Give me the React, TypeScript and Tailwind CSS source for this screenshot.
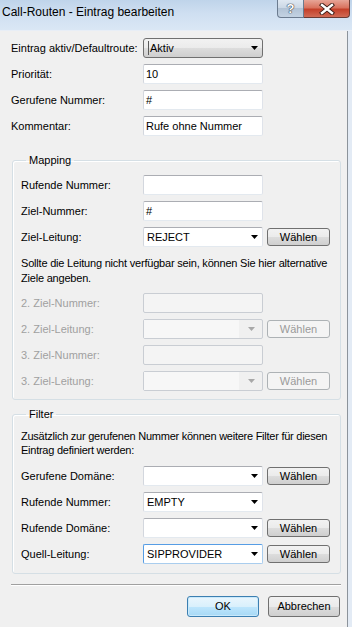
import React from "react";

const FONT = { fontFamily: '"Liberation Sans", Arial, sans-serif' };

function Arrow({ disabled }: { disabled?: boolean }) {
  return (
    <svg width="7" height="4" viewBox="0 0 7 4" className="shrink-0">
      <path d="M0 0H7L3.5 4Z" fill={disabled ? "#a8a8a8" : "#000"} />
    </svg>
  );
}

function TextBox({ value, disabled }: { value?: string; disabled?: boolean }) {
  return (
    <div
      className={
        disabled
          ? "w-[120px] h-[20px] rounded-[2px] border border-[#c9cdd3] bg-[#f4f4f4]"
          : "w-[120px] h-[20px] rounded-[2px] border border-[#abadb3] border-l-[#d3d7de] border-r-[#dfe3ea] border-b-[#e3e9ef] bg-white flex items-center pl-[2px] text-black"
      }
    >
      {value}
    </div>
  );
}

function Combo({ value, disabled, focused }: { value?: string; disabled?: boolean; focused?: boolean }) {
  if (disabled) {
    return (
      <div className="w-[120px] h-[20px] rounded-[2px] border border-[#c9cdd3] bg-[#f0f0f0] flex items-center">
        <div className="w-[95px] h-full bg-[#f7f7f7]" />
        <div className="flex-1 flex items-center justify-center pl-[2px]">
          <Arrow disabled />
        </div>
      </div>
    );
  }
  return (
    <div
      className={
        focused
          ? "w-[120px] h-[20px] rounded-[2px] border border-[#569de5] border-b-[#a9cdee] border-r-[#a9cdee] bg-white flex items-center pl-[3px] pr-[4px]"
          : "w-[120px] h-[20px] rounded-[2px] border border-[#abadb3] border-l-[#d3d7de] border-r-[#dfe3ea] border-b-[#e3e9ef] bg-white flex items-center pl-[3px] pr-[4px]"
      }
    >
      <span className="flex-1 text-black">{value}</span>
      <Arrow />
    </div>
  );
}

function BtnCombo({ value }: { value: string }) {
  return (
    <div className="w-[120px] h-[20px] rounded-[3px] border border-[#707070] bg-[linear-gradient(to_bottom,#f2f2f2_0%,#ebebeb_50%,#dddddd_50%,#cfcfcf_100%)] flex items-center pl-[4px] pr-[4px]">
      <span className="flex-1 text-black border-l border-[#5a5a5a] pl-[1px] leading-[14px]">{value}</span>
      <Arrow />
    </div>
  );
}

function Button({ label, disabled, def, w }: { label: string; disabled?: boolean; def?: boolean; w: "w" | "ok" | "ab" }) {
  const width = w === "w" ? "w-[63px] h-[18px]" : "w-[72px] h-[21px]";
  let cls = "rounded-[3px] border flex items-center justify-center " + width + " ";
  if (disabled) cls += "border-[#adb2b5] bg-[#f4f4f4] text-[#9a9a9a]";
  else if (def)
    cls +=
      "border-[#3c7fb1] bg-[linear-gradient(to_bottom,#eaf6fd_0%,#d9f0fc_50%,#bee6fd_50%,#a7d9f5_100%)] text-black shadow-[inset_0_0_0_1px_#c9e9fb]";
  else
    cls +=
      "border-[#707070] bg-[linear-gradient(to_bottom,#f2f2f2_0%,#ebebeb_50%,#dddddd_50%,#cfcfcf_100%)] text-black";
  return <div className={cls}>{label}</div>;
}

function Row({
  label,
  children,
  group,
  disabled,
}: {
  label: string;
  children: React.ReactNode;
  group?: boolean;
  disabled?: boolean;
}) {
  return (
    <div className="flex items-center h-[20px]">
      <span
        className={
          (group ? "w-[122px] " : "w-[132px] ") +
          (disabled ? "text-[#a0a0a0]" : "text-black")
        }
      >
        {label}
      </span>
      {children}
    </div>
  );
}

function Group({ title, children, className }: { title: string; children: React.ReactNode; className: string }) {
  return (
    <fieldset className={"ml-[1px] rounded-[3px] border border-[#d5dfe5] shadow-[inset_1px_1px_0_#ffffff] " + className}>
      <legend className="ml-[5px] px-[3px] leading-[14px] text-black">{title}</legend>
      {children}
    </fieldset>
  );
}

export default function App() {
  return (
    <div className="w-[352px] h-[627px] flex flex-col text-[11px] overflow-hidden" style={FONT}>
      {/* Title bar */}
      <div className="h-[31px] shrink-0 relative bg-[linear-gradient(to_bottom,#bfd4ea_0%,#cfdff1_45%,#dae7f5_100%)] border-b border-[#e8eef6]">
        <div className="absolute left-[2px] top-[4px] text-[12px] leading-[16px] text-black">
          Call-Routen - Eintrag bearbeiten
        </div>
        <div className="absolute right-[2px] top-0 flex">
          <div className="w-[27px] h-[18px] rounded-bl-[4px] border border-t-0 border-[#6b7b8f] bg-[linear-gradient(to_bottom,#dfe8f2_0%,#c9d6e4_50%,#b2c3d6_50%,#c3d2e2_100%)] flex items-center justify-center">
            <span
              className="text-[13px] font-bold leading-none text-white"
              style={{ textShadow: "0 0 1px #303a46, 0 0 1px #303a46, 0 0 1px #303a46" }}
            >
              ?
            </span>
          </div>
          <div className="w-[46px] h-[18px] rounded-br-[4px] border border-l-0 border-t-0 border-[#6b3a33] bg-[linear-gradient(to_bottom,#e7a597_0%,#d9735f_45%,#c4402a_55%,#d16a55_100%)] flex items-center justify-center">
            <svg width="16" height="12" viewBox="0 0 16 12">
              <path d="M3 2L13 10M13 2L3 10" stroke="#3a1a14" strokeWidth="4.2" strokeLinecap="square" />
              <path d="M3 2L13 10M13 2L3 10" stroke="#ffffff" strokeWidth="2.4" strokeLinecap="square" />
            </svg>
          </div>
        </div>
      </div>

      <div className="flex flex-1">
        {/* Body */}
        <div className="flex-1 bg-[#f0f0f0] border-r border-[#8c939b] flex flex-col pl-[11px] pr-[6px] pt-[7px]">
          <div className="flex flex-col gap-[6px]">
            <Row label="Eintrag aktiv/Defaultroute:">
              <BtnCombo value="Aktiv" />
            </Row>
            <Row label="Priorität:">
              <TextBox value="10" />
            </Row>
            <Row label="Gerufene Nummer:">
              <TextBox value="#" />
            </Row>
            <Row label="Kommentar:">
              <TextBox value="Rufe ohne Nummer" />
            </Row>
          </div>

          <Group title="Mapping" className="mt-[17px] pl-[8px] pt-[8px] pb-[8px]">
            <div className="flex flex-col gap-[6px]">
              <Row group label="Rufende Nummer:">
                <TextBox />
              </Row>
              <Row group label="Ziel-Nummer:">
                <TextBox value="#" />
              </Row>
              <Row group label="Ziel-Leitung:">
                <Combo value="REJECT" />
                <div className="ml-[4px]">
                  <Button w="w" label="Wählen" />
                </div>
              </Row>
            </div>
            <p className="mt-[9px] mb-[7px] leading-[15px] text-black whitespace-nowrap tracking-[-0.2px]">
              Sollte die Leitung nicht verfügbar sein, können Sie hier alternative
              <br />
              Ziele angeben.
            </p>
            <div className="flex flex-col gap-[6px]">
              <Row group disabled label="2. Ziel-Nummer:">
                <TextBox disabled />
              </Row>
              <Row group disabled label="2. Ziel-Leitung:">
                <Combo disabled />
                <div className="ml-[4px]">
                  <Button w="w" disabled label="Wählen" />
                </div>
              </Row>
              <Row group disabled label="3. Ziel-Nummer:">
                <TextBox disabled />
              </Row>
              <Row group disabled label="3. Ziel-Leitung:">
                <Combo disabled />
                <div className="ml-[4px]">
                  <Button w="w" disabled label="Wählen" />
                </div>
              </Row>
            </div>
          </Group>

          <Group title="Filter" className="mt-[7px] pl-[8px] pt-[8px] pb-[9px]">
            <p className="leading-[14px] text-black whitespace-nowrap tracking-[-0.25px]">
              Zusätzlich zur gerufenen Nummer können weitere Filter für diesen
              <br />
              Eintrag definiert werden:
            </p>
            <div className="mt-[9px] flex flex-col gap-[6px]">
              <Row group label="Gerufene Domäne:">
                <Combo value="" />
                <div className="ml-[4px]">
                  <Button w="w" label="Wählen" />
                </div>
              </Row>
              <Row group label="Rufende Nummer:">
                <Combo value="EMPTY" />
              </Row>
              <Row group label="Rufende Domäne:">
                <Combo value="" />
                <div className="ml-[4px]">
                  <Button w="w" label="Wählen" />
                </div>
              </Row>
              <Row group label="Quell-Leitung:">
                <Combo focused value="SIPPROVIDER" />
                <div className="ml-[4px]">
                  <Button w="w" label="Wählen" />
                </div>
              </Row>
            </div>
          </Group>

          <div className="mt-[10px] border-t border-[#a0a0a0] border-b border-b-white" />

          <div className="mt-[10px] flex justify-end gap-[9px] pr-[1px]">
            <Button w="ok" def label="OK" />
            <Button w="ab" label="Abbrechen" />
          </div>
        </div>
        {/* Right frame */}
        <div className="w-[4px] bg-[#e3ebf5]" />
      </div>
    </div>
  );
}
